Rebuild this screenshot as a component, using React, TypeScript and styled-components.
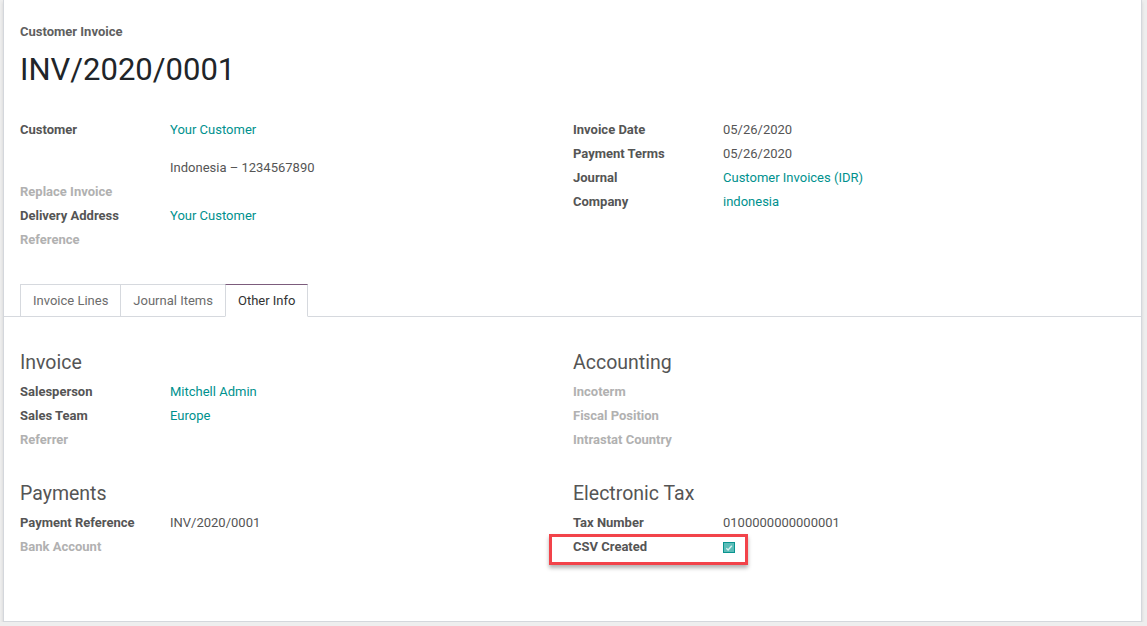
import styled, { createGlobalStyle } from 'styled-components';

const GlobalStyle = createGlobalStyle`
  html, body {
    margin: 0;
    padding: 0;
    background: #eeeeee;
    font-family: Roboto, "Noto Sans", "Liberation Sans", sans-serif;
    font-size: 13px;
    color: #4c4c4c;
  }
`

type Field = { label: string; value?: string; link?: boolean; muted?: boolean; address?: string; check?: boolean; mark?: boolean };

const topLeft: Field[] = [
  { label: 'Customer', value: 'Your Customer', link: true, address: 'Indonesia – 1234567890' },
  { label: 'Replace Invoice', muted: true },
  { label: 'Delivery Address', value: 'Your Customer', link: true },
  { label: 'Reference', muted: true },
];

const topRight: Field[] = [
  { label: 'Invoice Date', value: '05/26/2020' },
  { label: 'Payment Terms', value: '05/26/2020' },
  { label: 'Journal', value: 'Customer Invoices (IDR)', link: true },
  { label: 'Company', value: 'indonesia', link: true },
];

const sections: { title: string; fields: Field[] }[] = [
  {
    title: 'Invoice',
    fields: [
      { label: 'Salesperson', value: 'Mitchell Admin', link: true },
      { label: 'Sales Team', value: 'Europe', link: true },
      { label: 'Referrer', muted: true },
    ],
  },
  {
    title: 'Accounting',
    fields: [
      { label: 'Incoterm', muted: true },
      { label: 'Fiscal Position', muted: true },
      { label: 'Intrastat Country', muted: true },
    ],
  },
  {
    title: 'Payments',
    fields: [
      { label: 'Payment Reference', value: 'INV/2020/0001' },
      { label: 'Bank Account', muted: true },
    ],
  },
  {
    title: 'Electronic Tax',
    fields: [
      { label: 'Tax Number', value: '0100000000000001' },
      { label: 'CSV Created', check: true, mark: true },
    ],
  },
];

const tabs = ['Invoice Lines', 'Journal Items', 'Other Info'];

const FieldRow = ({ f }: { f: Field }) => (
  <Row>
    <Label $muted={f.muted}>{f.label}</Label>
    <Value $link={f.link}>
      {f.value}
      {f.address && <Address>{f.address}</Address>}
      {f.check && (
        <CheckBox>
          <svg width="8" height="8" viewBox="0 0 8 8">
            <path d="M1.3 4.3 L3.1 6 L6.8 1.8" fill="none" stroke="#d8f0ee" strokeWidth="1.4" />
          </svg>
        </CheckBox>
      )}
    </Value>
    {f.mark && <Highlight />}
  </Row>
);

const App = () => (
  <>
    <GlobalStyle />
    <Sheet>
      <Kind>Customer Invoice</Kind>
      <Title>INV/2020/0001</Title>
      <TopGroup>
        <Column>{topLeft.map(f => <FieldRow key={f.label} f={f} />)}</Column>
        <Column>{topRight.map(f => <FieldRow key={f.label} f={f} />)}</Column>
      </TopGroup>
      <TabBar>
        {tabs.map((t, i) => (
          <Tab key={t} $active={i === tabs.length - 1}>{t}</Tab>
        ))}
      </TabBar>
      <Sections>
        {sections.map(s => (
          <Column key={s.title}>
            <SectionTitle>{s.title}</SectionTitle>
            {s.fields.map(f => <FieldRow key={f.label} f={f} />)}
          </Column>
        ))}
      </Sections>
    </Sheet>
  </>
);

const Sheet = styled.div`
  margin: 0 5px 0 3px;
  padding: 22px 16px 62px;
  background: #fff;
  border: 1px solid #d4d7dc;
  border-top: none;
  box-shadow: 0 2px 3px rgba(0, 0, 0, 0.12);
`
const Kind = styled.div`
  font-weight: 700;
  font-size: 13px;
  line-height: 20px;
  color: #5f5f5f;
`
const Title = styled.h1`
  margin: 8px 0 0;
  font-weight: 400;
  font-size: 31px;
  line-height: 40px;
  color: #212529;
`
const TopGroup = styled.div`
  display: grid;
  grid-template-columns: 553px 1fr;
  margin-top: 28px;
  align-items: start;
`
const Column = styled.div`
  display: flex;
  flex-direction: column;
`
const Row = styled.div`
  position: relative;
  display: grid;
  grid-template-columns: 150px 1fr;
  line-height: 24px;
`
const Label = styled.div<{ $muted?: boolean }>`
  font-weight: 700;
  color: ${p => (p.$muted ? '#b1b1b1' : '#555')};
`
const Value = styled.div<{ $link?: boolean }>`
  color: ${p => (p.$link ? '#00918e' : '#555')};
`
const Address = styled.div`
  padding-top: 14px;
  color: #555;
`
const CheckBox = styled.span`
  display: inline-flex;
  align-items: center;
  justify-content: center;
  width: 12px;
  height: 11px;
  margin-top: 7px;
  vertical-align: top;
  box-sizing: border-box;
  background: #5cbdb8;
  border: 1px solid #0a948f;
`
const Highlight = styled.div`
  position: absolute;
  left: -24px;
  top: -1px;
  width: 199px;
  height: 31px;
  box-sizing: border-box;
  border: 3px solid #f2434a;
  box-shadow: 0 3px 4px rgba(0, 0, 0, 0.3);
  pointer-events: none;
`
const TabBar = styled.div`
  display: flex;
  margin: 32px -16px 0;
  padding-left: 16px;
  border-bottom: 1px solid #d6d9de;
`
const Tab = styled.div<{ $active?: boolean }>`
  margin-bottom: -1px;
  margin-right: -1px;
  padding: 0 12px;
  line-height: 31px;
  border: 1px solid #d6d9de;
  border-top-color: ${p => (p.$active ? '#7c5c7c' : '#d6d9de')};
  border-bottom-color: ${p => (p.$active ? '#fff' : '#d6d9de')};
  background: #fff;
  color: ${p => (p.$active ? '#333' : '#6c6c6c')};
`
const Sections = styled.div`
  display: grid;
  grid-template-columns: 553px 1fr;
  row-gap: 28px;
  margin-top: 32px;
`
const SectionTitle = styled.h2`
  margin: 0 0 3px;
  font-weight: 400;
  font-size: 19.5px;
  line-height: 28px;
  color: #555;
`

export default App;
